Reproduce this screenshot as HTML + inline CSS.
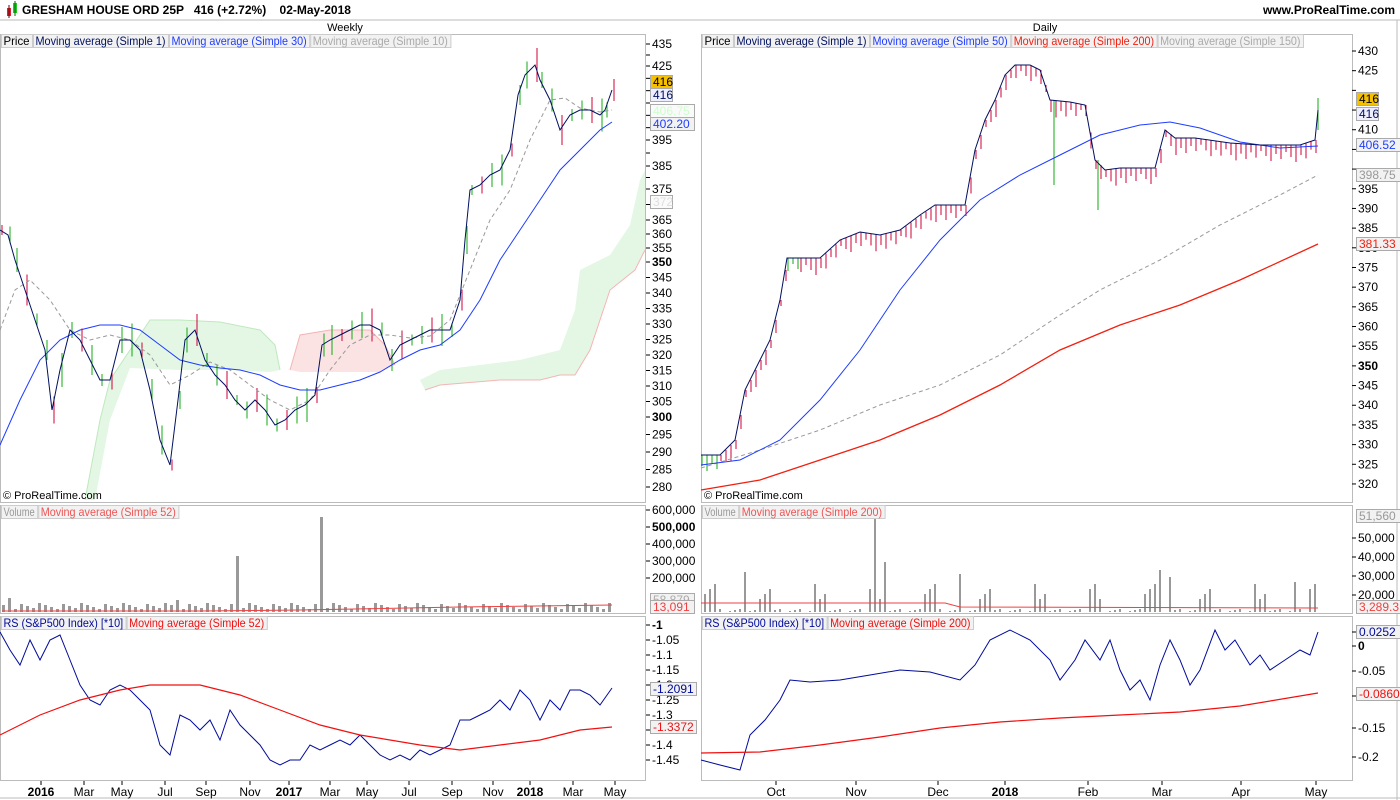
<!DOCTYPE html>
<html><head><meta charset="utf-8"><style>
body{margin:0;background:#fff;width:1400px;height:800px;overflow:hidden;font-family:"Liberation Sans",sans-serif}
svg{display:block}
text{font-family:"Liberation Sans",sans-serif}
</style></head><body>
<svg id="s" width="1400" height="800" xmlns="http://www.w3.org/2000/svg"></svg>
<script>
var o='';
function P(pts,c,w,d){o+='<polyline fill="none" stroke="'+c+'" stroke-width="'+(w||1)+'"'+(d?' stroke-dasharray="'+d+'"':'')+' points="'+pts.map(function(p){return p.join(',')}).join(' ')+'"/>';}
function R(x,y,w,h,f,s){o+='<rect x="'+x+'" y="'+y+'" width="'+w+'" height="'+h+'" fill="'+(f||'none')+'"'+(s?' stroke="'+s+'"':'')+'/>';}
function T(x,y,t,c,sz,a,b,tl){o+='<text x="'+x+'" y="'+y+'" fill="'+(c||'#000')+'" font-size="'+(sz||12)+'"'+(a?' text-anchor="'+a+'"':'')+(b?' font-weight="bold"':'')+(tl?' textLength="'+tl+'" lengthAdjust="spacingAndGlyphs"':'')+'>'+t+'</text>';}
function L(x1,y1,x2,y2,c){o+='<line x1="'+x1+'" y1="'+y1+'" x2="'+x2+'" y2="'+y2+'" stroke="'+c+'"/>';}
var G='#bbb';
R(7,8,4,8,'#d23');R(13,3,4,10,'#2c2');L(9,5,9,18,'#600');L(15,1,15,16,'#060');
T(22,14,'GRESHAM HOUSE ORD 25P &#160; 416 (+2.72%) &#160;&#160; 02-May-2018','#000',12,null,1);
T(1395,14,'www.ProRealTime.com','#000',12,'end',1);
L(0,20,1400,20,G);
T(345,31,'Weekly','#000',11,'middle');T(1045,31,'Daily','#000',11,'middle');
R(0.5,34.5,645,468,null,G);R(0.5,505.5,645,108,null,G);R(0.5,616.5,645,164,null,G);
R(701.5,34.5,651,468,null,G);R(701.5,505.5,651,108,null,G);R(701.5,616.5,651,164,null,G);
L(1397,20,1397,800,G);L(0,798,1400,798,G);
o+='<polygon fill="#e4f7e4" points="85,500 100,420 110,380 130,350 150,320 180,320 220,322 260,330 275,345 280,370 270,372 230,370 180,370 130,368 110,420 95,500"/>';
o+='<polygon fill="#fbe3e3" points="290,370 300,335 330,330 370,330 385,345 395,365 380,372 340,372 300,372"/>';
o+='<polygon fill="#e4f7e4" points="420,380 440,370 480,365 520,360 560,350 575,310 580,270 610,255 630,225 640,180 645,170 645,250 635,270 610,290 590,350 575,375 560,375 540,380 500,380 440,385 425,390"/>';
P([[85,500],[100,420],[110,380],[130,350],[150,320],[180,320],[220,322],[260,330],[275,345],[280,370]],'#bfe8bf');
P([[290,370],[300,335],[330,330],[370,330],[385,345],[395,365]],'#f4b5b5');
P([[425,390],[440,385],[500,380],[540,380],[560,375],[575,375],[590,350],[610,290],[635,270],[645,250]],'#f4b5b5');
var lp=[[0,230],[8,235],[15,260],[25,290],[35,320],[45,350],[52,410],[60,370],[70,330],[80,340],[90,360],[100,380],[110,380],[120,340],[130,340],[140,350],[150,390],[160,440],[170,465],[178,400],[185,340],[195,330],[205,360],[215,375],[225,385],[235,400],[245,410],[255,400],[265,410],[275,425],[285,420],[295,410],[305,405],[315,395],[322,345],[330,340],[340,335],[350,330],[360,325],[370,325],[380,330],[390,360],[400,345],[410,340],[420,335],[430,330],[440,330],[450,330],[460,300],[465,240],[470,190],[480,185],[490,175],[500,170],[510,150],[518,95],[525,75],[535,65],[540,80],[550,100],[560,130],[570,115],[580,110],[590,110],[600,115],[605,110],[612,90]];
lp.forEach(function(p,i){var c=(i%3==0)?'#d0003a':'#1a1';var h=10+(i*7)%25;L(p[0]+2,p[1]-h/2,p[0]+2,p[1]+h/2,c);});
P([[0,330],[15,290],[30,280],[50,300],[70,330],[90,340],[110,335],[130,340],[150,355],[170,385],[190,375],[210,362],[230,370],[250,385],[270,400],[290,410],[310,400],[330,370],[350,345],[370,335],[390,335],[410,338],[430,336],[450,320],[470,270],[490,220],[510,190],[530,140],[550,100],[565,98],[580,108],[600,112],[612,110]],'#999',1,'4,3');
P([[0,445],[20,400],[40,360],[60,340],[80,330],[100,325],[120,325],[140,330],[160,345],[180,360],[200,365],[220,368],[240,370],[260,375],[280,385],[300,390],[320,390],[340,385],[360,380],[380,372],[400,360],[420,350],[440,345],[460,330],[480,300],[500,260],[520,230],[540,200],[560,170],[580,150],[600,130],[612,122]],'#1e3cff');
P(lp,'#001060');
var rp=[[701,455],[720,455],[735,440],[745,390],[760,360],[770,340],[780,300],[787,258],[800,258],[820,258],[840,240],[860,232],[880,235],[900,230],[920,215],[935,205],[965,205],[975,150],[985,120],[995,100],[1005,75],[1015,65],[1030,65],[1040,70],[1050,100],[1070,102],[1085,105],[1095,160],[1105,170],[1120,168],[1140,168],[1155,168],[1165,130],[1175,138],[1195,138],[1230,143],[1260,145],[1300,145],[1315,140],[1318,110]];
for(var i=0;i<rp.length-1;i++){var a=rp[i],b=rp[i+1];for(var x=a[0];x<b[0];x+=5){var y=a[1]+(b[1]-a[1])*(x-a[0])/(b[0]-a[0]);var c=((x*7)%5==0)?'#d0003a':'#1a1';L(x+1,y,x+1,y+6+(x*13)%12,c);}}
L(1318,98,1318,130,'#1a1');L(1054,100,1054,185,'#1a1');L(1098,160,1098,210,'#1a1');
P([[701,468],[760,450],[820,430],[880,405],[940,385],[1000,355],[1060,315],[1100,290],[1160,260],[1220,225],[1280,195],[1318,175]],'#999',1,'4,3');
P([[701,490],[760,480],[820,460],[880,440],[940,415],[1000,385],[1060,350],[1120,325],[1180,305],[1240,280],[1318,244]],'#f02010',1.3);
P([[701,465],[740,460],[780,440],[820,400],[860,350],[900,290],[940,240],[980,200],[1020,175],[1060,155],[1100,135],[1140,125],[1170,122],[1200,128],[1240,142],[1280,148],[1318,146]],'#1e3cff');
P(rp,'#001060');
for(var x=2;x<612;x+=6){var h=3+((x*37)%7);if(x==8)h=14;if(x==236)h=56;if(x==320)h=95;if(x==176)h=12;if(x==608)h=9;R(x,612-h,3,h,'#999');}
P([[2,611],[200,611],[300,610],[460,607],[612,605]],'#f04040');
for(var x=704;x<1318;x+=5){var h=((x*53)%11<3)?10+((x*17)%20):((x*29)%4);if(x==744)h=40;if(x==874)h=95;if(x==884)h=50;if(x==959)h=38;if(x==1159)h=42;if(x==1169)h=35;if(x==1294)h=30;if(x==1316)h=97;if(h>0)R(x,612-h,2,h,'#999');}
P([[701,603],[870,603],[945,603],[960,607],[1318,608]],'#f04040');
P([[0,632],[10,650],[20,665],[30,640],[40,660],[50,640],[60,635],[70,660],[80,685],[90,700],[100,705],[110,690],[120,685],[130,690],[140,700],[150,710],[160,745],[170,755],[180,715],[190,720],[200,730],[210,720],[220,740],[230,710],[240,725],[250,735],[260,745],[270,760],[280,765],[290,760],[300,760],[310,745],[320,750],[330,745],[340,740],[350,745],[360,735],[370,745],[380,755],[390,760],[400,755],[410,760],[420,750],[430,755],[440,750],[450,745],[460,720],[470,720],[480,715],[490,710],[500,700],[510,710],[520,690],[530,700],[540,720],[550,700],[560,710],[570,690],[580,690],[590,695],[600,705],[612,688]],'#000a9a');
P([[0,735],[40,715],[80,700],[120,690],[150,685],[200,685],[240,695],[280,710],[320,725],[360,735],[420,745],[460,750],[500,745],[540,740],[580,730],[612,727]],'#f01010',1.2);
P([[701,760],[720,765],[740,770],[750,735],[765,720],[780,700],[790,680],[810,682],[840,680],[870,675],[900,670],[930,672],[960,680],[975,665],[990,640],[1010,630],[1030,640],[1050,660],[1060,680],[1075,660],[1085,640],[1100,660],[1110,640],[1120,670],[1130,690],[1140,680],[1150,700],[1160,665],[1170,640],[1180,660],[1190,685],[1200,670],[1215,630],[1225,650],[1235,640],[1250,665],[1260,655],[1270,670],[1285,660],[1300,650],[1310,655],[1318,632]],'#000a9a');
P([[701,753],[760,752],[820,745],[880,737],[940,728],[1000,722],[1060,718],[1120,715],[1180,712],[1240,706],[1318,693]],'#f01010',1.2);
function leg(x,y,items){items.forEach(function(it){var tw=it[0].replace('&amp;','&').length*5.2;var w=tw+5;R(x+.5,y+.5,w,13,'#f2f2f2','#ccc');T(x+2.5,y+11,it[0],it[1],12,null,0,tw);x+=w+1;});}
leg(1,34,[['Price','#000'],['Moving average (Simple 1)','#001060'],['Moving average (Simple 30)','#1e3cff'],['Moving average (Simple 10)','#aaa']]);
leg(702,34,[['Price','#000'],['Moving average (Simple 1)','#001060'],['Moving average (Simple 50)','#1e3cff'],['Moving average (Simple 200)','#f02010'],['Moving average (Simple 150)','#aaa']]);
leg(1,505,[['Volume','#999'],['Moving average (Simple 52)','#e55']]);
leg(702,505,[['Volume','#999'],['Moving average (Simple 200)','#e55']]);
leg(1,616,[['RS (S&amp;P500 Index) [*10]','#000a9a'],['Moving average (Simple 52)','#f01010']]);
leg(702,616,[['RS (S&amp;P500 Index) [*10]','#000a9a'],['Moving average (Simple 200)','#f01010']]);
T(3,499,'© ProRealTime.com','#000',11);T(704,499,'© ProRealTime.com','#000',11);
function ax(x,y,t,b){L(x-4,y,x,y,'#000');T(x+2,y+4,t,'#000',12,null,b);}
function tk(x,y){L(x-4,y,x,y,'#000');}
// left nonlinear scale
var kp=[[435,44],[425,66],[395,140],[385,166],[375,189],[365,220],[350,262],[300,417],[280,487]];
function ly(v){for(var i=0;i<kp.length-1;i++){var a=kp[i],b=kp[i+1];if(v<=a[0]&&v>=b[0])return a[1]+(b[1]-a[1])*(a[0]-v)/(a[0]-b[0]);}return 0;}
for(var v=435;v>=280;v-=5){var y=ly(v);var show=(v>=365&&v<=435)?([435,425,395,385,375,365].indexOf(v)>=0):true;if(show)ax(650,y,v,v==350||v==300);else tk(650,y);}
for(var v=430;v>=320;v-=5){if(v==420||v==415||v==405||v==400)tk(1356,51+(430-v)*3.936);else ax(1356,51+(430-v)*3.936,v,v==350);}
var vl=['600,000','500,000','400,000','300,000','200,000'];vl.forEach(function(t,i){ax(650,510+i*17,t,i==1);});
var vr=[['50,000',538],['40,000',557],['30,000',576],['20,000',595]];vr.forEach(function(t){ax(1356,t[1],t[0]);});
var rl=['-1','-1.05','-1.1','-1.15','-1.2','-1.25','-1.3','-1.35','-1.4','-1.45'];rl.forEach(function(t,i){ax(650,625+i*15,t,i==0);});
[['0.0252',632],['0',646],['-0.05',671],['-0.1',696],['-0.15',728],['-0.2',757]].forEach(function(t){ax(1356,t[1],t[0],t[0]=='0');});
function bd(x,y,t,c,bg,w){R(x+.5,y+.5,w||44,13,bg||'#f2f2f2','#aaa');T(x+3,y+11,t,c,12);}
bd(650,75,'416','#000','#f5c000',22);bd(650,88,'416','#001060','#eef',22);bd(650,104,'406.75','#cfc','#fafafa');bd(650,117,'402.20','#1e3cff');bd(650,195,'372','#ddd','#fafafa',22);
bd(1356,92,'416','#000','#f5c000',22);bd(1356,107,'416','#001060','#eef',22);bd(1356,138,'406.52','#1e3cff');bd(1356,168,'398.75','#999');bd(1356,237,'381.33','#f02010');
bd(650,593,'58,879','#aaa');bd(650,600,'13,091','#f04040');bd(1356,509,'51,560','#999');bd(1356,600,'3,289.3','#f04040');
bd(650,682,'-1.2091','#000a9a',null,46);bd(650,720,'-1.3372','#f01010',null,46);bd(1356,625,'0.0252','#000a9a');bd(1356,687,'-0.0860','#f01010',null,46);
[['2016',41,1],['Mar',84],['May',122],['Jul',165],['Sep',206],['Nov',250],['2017',289,1],['Mar',330],['May',367],['Jul',409],['Sep',452],['Nov',493],['2018',530,1],['Mar',573],['May',615],
 ['Oct',776],['Nov',856],['Dec',938],['2018',1005,1],['Feb',1088],['Mar',1162],['Apr',1241],['May',1316]].forEach(function(d){L(d[1],781,d[1],785,'#000');T(d[1],796,d[0],'#000',12,'middle',d[2]);});
document.getElementById('s').innerHTML=o;
</script>
</body></html>
